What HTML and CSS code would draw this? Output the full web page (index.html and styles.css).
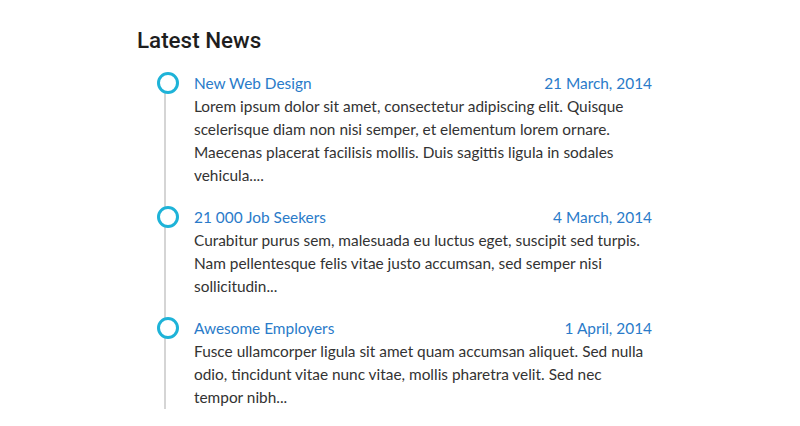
FILE: index.html
```html
<!DOCTYPE html>
<html lang="en">
<head>
    <meta charset="UTF-8">
    <title>Latest News</title>
    <link rel="stylesheet" href="styles.css">
</head>
<body>
    <div class="news">
        <h2 class="news-title">Latest News</h2>

        <ul class="timeline">
            <li class="timeline-item">
                <div class="item-head">
                    <a href="#" class="item-title">New Web Design</a>
                    <span class="item-date">21 March, 2014</span>
                </div>
                <p class="item-text">Lorem ipsum dolor sit amet, consectetur adipiscing elit. Quisque scelerisque diam non nisi semper, et elementum lorem ornare. Maecenas placerat facilisis mollis. Duis sagittis ligula in sodales vehicula....</p>
            </li>
            <li class="timeline-item">
                <div class="item-head">
                    <a href="#" class="item-title">21 000 Job Seekers</a>
                    <span class="item-date">4 March, 2014</span>
                </div>
                <p class="item-text">Curabitur purus sem, malesuada eu luctus eget, suscipit sed turpis. Nam pellentesque felis vitae justo accumsan, sed semper nisi sollicitudin...</p>
            </li>
            <li class="timeline-item">
                <div class="item-head">
                    <a href="#" class="item-title">Awesome Employers</a>
                    <span class="item-date">1 April, 2014</span>
                </div>
                <p class="item-text">Fusce ullamcorper ligula sit amet quam accumsan aliquet. Sed nulla odio, tincidunt vitae nunc vitae, mollis pharetra velit. Sed nec tempor nibh...</p>
            </li>
        </ul>
    </div>
</body>
</html>
```

FILE: styles.css
```css
* {
    margin: 0;
    padding: 0;
    box-sizing: border-box;
}

body {
    font-family: 'Lato', 'Liberation Sans', Arial, sans-serif;
    background-color: #ffffff;
    color: #333333;
    padding: 26px 0 0 137px;
}

.news {
    width: 515px;
}

.news-title {
    font-family: 'Roboto', 'Liberation Sans', Arial, sans-serif;
    font-size: 22.4px;
    font-weight: 500;
    color: #1e1e1e;
    line-height: 28px;
    margin-bottom: 18px;
}

.timeline {
    list-style: none;
    position: relative;
    padding-left: 57px;
}

/* vertical line behind the dots */
.timeline::before {
    content: "";
    position: absolute;
    left: 27px;
    top: 14px;
    bottom: 0;
    width: 2px;
    background-color: #d5d5d5;
}

.timeline-item {
    position: relative;
    margin-bottom: 19px;
}

.timeline-item:last-child {
    margin-bottom: 0;
}

.timeline-item::before {
    content: "";
    position: absolute;
    left: -37px;
    top: 0;
    width: 16px;
    height: 16px;
    border: 3px solid #1eb3d8;
    border-radius: 50%;
    background-color: #ffffff;
}

.item-head {
    display: flex;
    justify-content: space-between;
    font-size: 15.4px;
    line-height: 23px;
}

.item-title,
.item-date {
    color: #2a7bc9;
    text-decoration: none;
}

.item-text {
    font-size: 15.4px;
    line-height: 23px;
    color: #333333;
}
```
